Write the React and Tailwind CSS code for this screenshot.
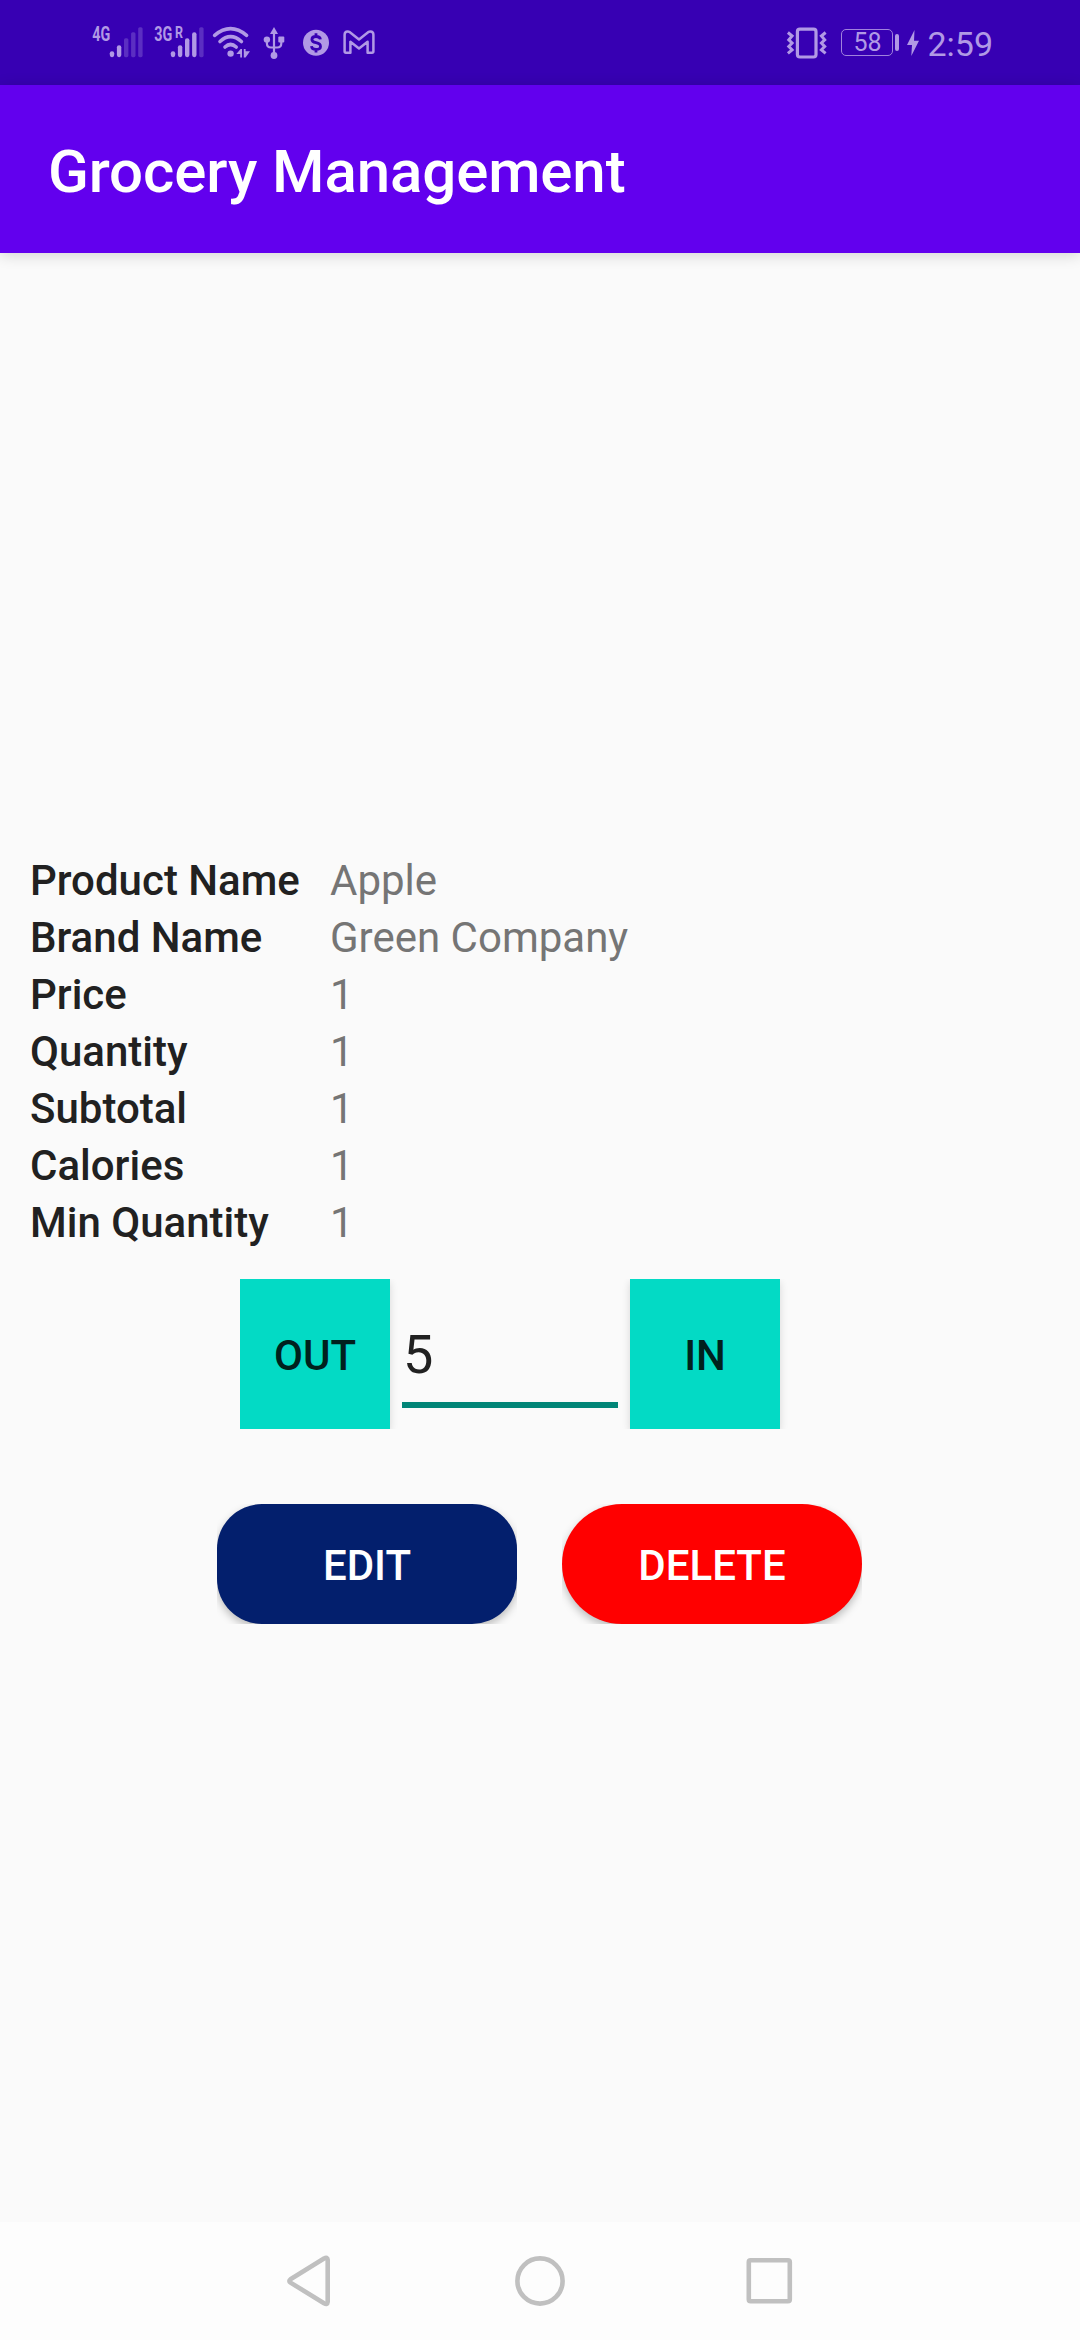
const INK = '#b199e5';

const BAR_HEIGHTS = [6, 12, 19, 25, 30];

const SIGNALS = [
  { label: '4G', roaming: false, active: 2, first: 20 },
  { label: '3G', roaming: true, active: 4, first: 19 },
];

const DETAILS = [
  ['Product Name', 'Apple'],
  ['Brand Name', 'Green Company'],
  ['Price', '1'],
  ['Quantity', '1'],
  ['Subtotal', '1'],
  ['Calories', '1'],
  ['Min Quantity', '1'],
];

function Signal({ label, roaming, active, first }) {
  return (
    <svg className="h-[84px] w-[52px] shrink-0" viewBox="0 0 52 84" fill={INK}>
      <text x="0.3" y="41" fontFamily="Roboto" fontWeight="700" fontSize="20" textLength="18" lengthAdjust="spacingAndGlyphs">
        {label}
      </text>
      {roaming && (
        <text x="21" y="38" fontFamily="Roboto" fontWeight="700" fontSize="16" textLength="8" lengthAdjust="spacingAndGlyphs">
          R
        </text>
      )}
      {BAR_HEIGHTS.map((h, i) => (
        <rect
          key={h}
          x={first - 2.2 + i * 7.1}
          y={57.2 - h}
          width="4.4"
          height={h}
          rx={i < active ? 2.1 : 1.6}
          opacity={i < active ? 1 : 0.3}
        />
      ))}
    </svg>
  );
}

function Wifi() {
  return (
    <svg className="ml-[4px] h-[84px] w-[38px] shrink-0" viewBox="0 0 38 84" fill="none" stroke={INK} strokeWidth="3.6" strokeLinecap="round">
      <path d="M2.6 35.3 Q18.5 22 34.6 35.3" />
      <path d="M8 41.5 Q18.5 31.8 29.4 41.5" />
      <path d="M13 47 Q18.5 42 24.2 47" />
      <circle cx="18.6" cy="53.6" r="3.2" fill={INK} stroke="none" />
      <path d="M24.3 54 L28.6 49 H30 V57.5 H28.2 V54 Z M31.8 57.5 V49 H33.6 V51.2 H38 L33.6 57.5 Z" fill={INK} stroke="none" />
    </svg>
  );
}

function Usb() {
  return (
    <svg className="ml-[13px] h-[84px] w-[22px] shrink-0" viewBox="0 0 22 84" fill={INK}>
      <path d="M11 27 L15 34 H7 Z" />
      <circle cx="11" cy="55.5" r="3.4" />
      <circle cx="3.9" cy="39.6" r="3.2" />
      <rect x="15.3" y="36.6" width="6" height="6" rx="1" />
      <path d="M11 32 V55 M3.9 40 V43.5 Q4 47.5 8 47.5 H14.2 Q18.2 47.5 18.3 43.5 V40" fill="none" stroke={INK} strokeWidth="2.2" />
    </svg>
  );
}

function Dollar() {
  return (
    <svg className="ml-[17px] h-[84px] w-[28px] shrink-0" viewBox="0 0 28 84">
      <circle cx="14" cy="42.8" r="13" fill={INK} />
      <path
        d="M18.4 39.4 Q18 36.5 14 36.5 Q9.9 36.5 9.9 39.5 Q9.9 41.9 14 42.7 Q18.5 43.6 18.5 46.4 Q18.5 49.3 14 49.3 Q9.7 49.3 9.5 46.1 M14 33.2 V36.5 M14 49.3 V52.6"
        fill="none"
        stroke="#3700b3"
        strokeWidth="2.8"
      />
    </svg>
  );
}

function Mail() {
  return (
    <svg className="ml-[13px] h-[84px] w-[32px] shrink-0" viewBox="0 0 32 84" fill="none" stroke={INK} strokeWidth="2.5" strokeLinejoin="round">
      <path d="M1.6 34.7 Q1.6 31.4 4.6 31.4 Q5.7 31.4 6.6 32.1 L16 39.4 L25.4 32.1 Q26.3 31.4 27.4 31.4 Q30.4 31.4 30.4 34.7 V51.3 Q30.4 52.7 29 52.7 H24.6 V41.8 L16 48.4 L7.4 41.8 V52.7 H3 Q1.6 52.7 1.6 51.3 Z" />
    </svg>
  );
}

function Vibrate() {
  return (
    <svg className="h-[84px] w-[41px] shrink-0" viewBox="0 0 41 84" fill="none" stroke={INK} strokeWidth="3">
      <rect x="11.4" y="28.2" width="18.6" height="27.8" rx="2.5" strokeWidth="3.2" />
      <path d="M1.9 31.5 L6.1 35 L2.8 38.8 L6.1 42 L2.8 45.5 L6.1 48.8 L1.9 52.3" />
      <path d="M39.6 31.5 L35.4 35 L38.7 38.8 L35.4 42 L38.7 45.5 L35.4 48.8 L39.6 52.3" />
    </svg>
  );
}

function StatusBar() {
  return (
    <div className="flex h-[85px] shrink-0 items-start bg-[#3700b3] pl-[92px] pr-[87px]">
      <Signal {...SIGNALS[0]} />
      <div className="w-[10px] shrink-0" />
      <Signal {...SIGNALS[1]} />
      <div className="w-[2px] shrink-0" />
      <Wifi />
      <Usb />
      <Dollar />
      <Mail />
      <div className="ml-auto flex h-[85px] items-center text-[#b199e5]">
        <Vibrate />
        <div className="ml-[14px] flex h-[27px] w-[52px] items-center justify-center rounded-[5px] border border-[#a082dd] text-[25px] leading-none">
          <span>58</span>
        </div>
        <div className="ml-[2px] h-[17px] w-[4px] rounded-[2px] bg-[#b199e5]" />
        <svg className="ml-[8px] h-[26px] w-[12px]" viewBox="0 0 12 26" fill={INK}>
          <path d="M7.5 0 L0 15 H5 L4.3 26 L12 10.8 H7 Z" />
        </svg>
        <span className="ml-[8px] pt-[2px] text-[34px] leading-none">2:59</span>
      </div>
    </div>
  );
}

function SquareButton({ children, className }) {
  return (
    <button
      className={`size-[150px] bg-[#03dac5] pt-[3px] text-[42px] font-medium text-[#00211d] shadow-[0_3px_8px_rgba(0,0,0,0.14)] ${className}`}
    >
      {children}
    </button>
  );
}

function PillButton({ children, className }) {
  return (
    <div className="overflow-hidden">
      <button className={`block h-[120px] w-[300px] pt-[3px] text-[42px] font-medium text-white shadow-[0_4px_9px_rgba(0,0,0,0.25)] ${className}`}>
        {children}
      </button>
    </div>
  );
}

export default function App() {
  return (
    <div className="flex h-[2340px] w-[1080px] flex-col overflow-hidden bg-[#fafafa] font-['Roboto',sans-serif]">
      <StatusBar />
      <header className="flex h-[168px] shrink-0 items-center bg-[#6200ee] pl-[48px] pt-[5px] shadow-[0_2px_14px_rgba(0,0,0,0.16)]">
        <h1 className="text-[60px] font-medium leading-[70px] tracking-[-0.1px] text-white">Grocery Management</h1>
      </header>

      <main className="flex flex-1 flex-col pt-[599px]">
        <dl className="pl-[30px] text-[42px] leading-[57px]">
          {DETAILS.map(([name, value]) => (
            <div key={name} className="flex">
              <dt className="w-[300px] font-medium text-[#212121]">{name}</dt>
              <dd className="text-[#757575]">{value}</dd>
            </div>
          ))}
        </dl>

        <div className="mt-[28px] flex pl-[240px]">
          <SquareButton className="[clip-path:inset(0_-12px_0_0)]">OUT</SquareButton>
          <input
            className="mx-[12px] mt-[20px] h-[109px] w-[216px] border-b-[6px] border-[#018577] bg-transparent pl-px pt-[8px] text-[54px] text-[#212121] outline-none"
            defaultValue="5"
          />
          <SquareButton className="[clip-path:inset(0_-12px_0_-12px)]">IN</SquareButton>
        </div>

        <div className="mt-[75px] flex gap-[45px] pl-[217px]">
          <PillButton className="rounded-[45px] bg-[#031f6d]">EDIT</PillButton>
          <PillButton className="rounded-[60px] bg-[#ff0000]">DELETE</PillButton>
        </div>
      </main>

      <nav className="flex h-[118px] shrink-0 items-center justify-center gap-[178px] bg-[#fdfdfd]">
        <svg className="size-[52px]" viewBox="0 0 52 52" fill="none" stroke="#c0c0c0" strokeWidth="4.6" strokeLinejoin="round">
          <path d="M40 3.5 Q43.5 1.7 43.7 5 V46.8 Q43.5 50 40 48.2 L6.5 27.6 Q4.2 26 6.5 24.2 Z" />
        </svg>
        <svg className="size-[52px]" viewBox="0 0 52 52" fill="none" stroke="#c0c0c0" strokeWidth="4.6">
          <circle cx="26" cy="26" r="22.6" />
        </svg>
        <svg className="size-[52px]" viewBox="0 0 52 52" fill="none" stroke="#c0c0c0" strokeWidth="4.6">
          <rect x="4.8" y="5.3" width="41" height="41" rx="1.8" />
        </svg>
      </nav>
    </div>
  );
}
